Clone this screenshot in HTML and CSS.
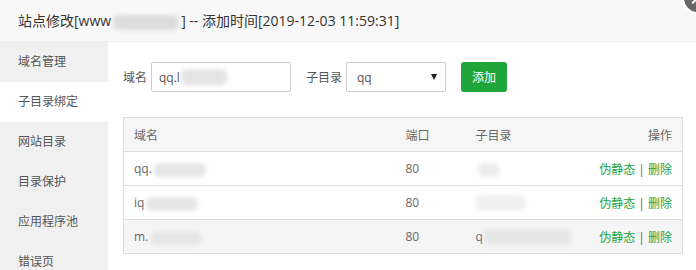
FILE: index.html
```html
<!DOCTYPE html>
<html lang="zh-CN">
<head>
    <meta charset="UTF-8">
    <title>站点修改</title>
    <link rel="stylesheet" href="styles.css">
</head>
<body>
    <div class="layer">
        <div class="layer-title">站点修改[www<span class="blur blur-title"></span>] -- 添加时间[2019-12-03 11:59:31]</div>
        <span class="layer-close"></span>

        <div class="layer-body">
            <ul class="side-menu">
                <li>域名管理</li>
                <li class="active">子目录绑定</li>
                <li>网站目录</li>
                <li>目录保护</li>
                <li>应用程序池</li>
                <li>错误页</li>
            </ul>

            <div class="content">
                <div class="bind-form">
                    <label>域名</label>
                    <div class="input-wrap">
                        <input type="text" class="text-input" value="qq.l">
                        <span class="blur blur-input"></span>
                    </div>
                    <label class="label-dir">子目录</label>
                    <div class="select-wrap">
                        <select class="dir-select">
                            <option>qq</option>
                        </select>
                    </div>
                    <button class="btn-add">添加</button>
                </div>

                <table class="bind-table">
                    <thead>
                        <tr>
                            <th class="col-domain">域名</th>
                            <th class="col-port">端口</th>
                            <th>子目录</th>
                            <th class="col-op">操作</th>
                        </tr>
                    </thead>
                    <tbody>
                        <tr>
                            <td>qq.<span class="blur blur-cell"></span></td>
                            <td>80</td>
                            <td><span class="blur blur-small"></span></td>
                            <td class="col-op"><a>伪静态</a> | <a>删除</a></td>
                        </tr>
                        <tr>
                            <td>iq<span class="blur blur-cell"></span></td>
                            <td>80</td>
                            <td><span class="blur blur-mid"></span></td>
                            <td class="col-op"><a>伪静态</a> | <a>删除</a></td>
                        </tr>
                        <tr class="hover">
                            <td>m.<span class="blur blur-cell"></span></td>
                            <td>80</td>
                            <td>q<span class="blur blur-wide"></span></td>
                            <td class="col-op"><a>伪静态</a> | <a>删除</a></td>
                        </tr>
                    </tbody>
                </table>
            </div>
        </div>
    </div>
</body>
</html>
```

FILE: styles.css
```css
* {
    box-sizing: border-box;
}

body {
    margin: 0;
    font-family: "Open Sans", "Noto Sans CJK SC", sans-serif;
    background: white;
    overflow: hidden;
}

.layer {
    position: relative;
    width: 696px;
    height: 270px;
    overflow: hidden;
}

.layer-title {
    height: 42px;
    line-height: 41px;
    padding-left: 18px;
    font-size: 14px;
    color: #333;
    background: #f8f8f8;
    border-bottom: 1px solid #eee;
    white-space: nowrap;
}

/* round close button, mostly outside the window */
.layer-close {
    position: absolute;
    left: 682px;
    top: -17px;
    width: 31px;
    height: 31px;
    border-radius: 50%;
    background: #666;
    border: 2px solid white;
}

.layer-close::before,
.layer-close::after {
    content: "";
    position: absolute;
    left: 6px;
    top: 12px;
    width: 15px;
    height: 2px;
    background: white;
    transform: rotate(45deg);
}

.layer-close::after {
    transform: rotate(-45deg);
}

.blur {
    display: inline-block;
    height: 13px;
    vertical-align: middle;
    background: #e2e2e2;
    border-radius: 6px;
    filter: blur(2px);
}

.blur-title {
    width: 66px;
    height: 15px;
    margin: 0 2px 0 2px;
    background: #dcdcdc;
}

.layer-body {
    display: flex;
    height: 228px;
}

.side-menu {
    list-style: none;
    margin: 0;
    padding: 0;
    width: 108px;
    background: #f0f0f0;
}

.side-menu li {
    height: 40px;
    line-height: 40px;
    padding-left: 18px;
    font-size: 12px;
    color: #555;
}

.side-menu li.active {
    background: white;
}

.content {
    flex: 1;
    padding: 20px 13px 0 15px;
}

.bind-form {
    display: flex;
    align-items: center;
    height: 30px;
    font-size: 12px;
    color: #555;
}

.bind-form label {
    margin-right: 4px;
}

.label-dir {
    margin-left: 15px;
}

.input-wrap {
    position: relative;
}

.text-input {
    width: 140px;
    height: 30px;
    padding: 0 7px;
    border: 1px solid #ccc;
    border-radius: 2px;
    font-family: inherit;
    font-size: 12px;
    color: #555;
}

.blur-input {
    position: absolute;
    left: 30px;
    top: 7px;
    width: 46px;
    height: 16px;
    background: #e4e4e4;
}

.select-wrap {
    position: relative;
}

.select-wrap::after {
    content: "";
    position: absolute;
    right: 9px;
    top: 12px;
    border-left: 3.5px solid transparent;
    border-right: 3.5px solid transparent;
    border-top: 6px solid #222;
}

.dir-select {
    appearance: none;
    width: 100px;
    height: 30px;
    padding: 0 10px;
    border: 1px solid #ccc;
    border-radius: 2px;
    background: white;
    font-family: inherit;
    font-size: 12px;
    color: #555;
}

.btn-add {
    margin-left: 15px;
    width: 46px;
    height: 30px;
    border: none;
    border-radius: 3px;
    background: #20a53a;
    color: white;
    font-family: inherit;
    font-size: 12px;
}

.bind-table {
    margin-top: 25px;
    width: 560px;
    border-collapse: collapse;
    table-layout: fixed;
    border: 1px solid #ddd;
    font-size: 12px;
    color: #666;
}

.bind-table th,
.bind-table td {
    height: 34px;
    padding: 0 10px;
    text-align: left;
    font-weight: normal;
    border-bottom: 1px solid #ddd;
    white-space: nowrap;
}

.bind-table thead tr {
    background: #f6f6f6;
}

.bind-table tr.hover {
    background: #f5f5f5;
}

.col-domain {
    width: 272px;
}

.col-port {
    width: 70px;
}

.bind-table .col-op {
    width: 110px;
    text-align: right;
}

.col-op a {
    color: #20a53a;
}

.blur-cell {
    width: 52px;
    height: 14px;
    margin-left: 2px;
    background: #e6e6e6;
}

.blur-small {
    width: 22px;
    height: 14px;
    margin-left: 2px;
    background: #ececec;
}

.blur-mid {
    width: 50px;
    height: 16px;
    background: #efefef;
}

.blur-wide {
    width: 88px;
    height: 16px;
    background: #e6e6e6;
}
```
